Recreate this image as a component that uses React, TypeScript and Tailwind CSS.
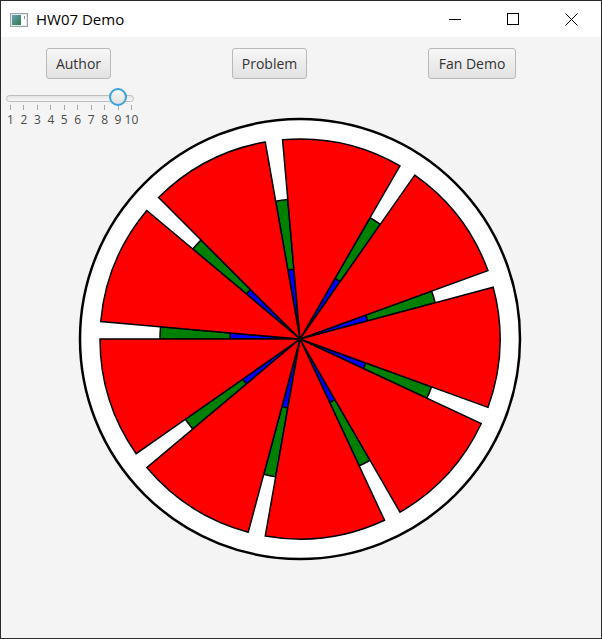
import React from 'react';

const CX = 223;
const CY = 223;

// angles are in degrees, counter-clockwise from 3 o'clock (like JavaFX Arc)
function pt(r: number, a: number) {
  const rad = (a * Math.PI) / 180;
  return [CX + r * Math.cos(rad), CY - r * Math.sin(rad)];
}

function sector(r: number, a1: number, a2: number) {
  const [x1, y1] = pt(r, a1);
  const [x2, y2] = pt(r, a2);
  return `M ${CX} ${CY} L ${x1.toFixed(2)} ${y1.toFixed(2)} A ${r} ${r} 0 0 0 ${x2.toFixed(2)} ${y2.toFixed(2)} Z`;
}

const BLADES = 9;
const STEP = 360 / BLADES;

function Fan() {
  const idx = Array.from({ length: BLADES }, (_, i) => i);
  return (
    <svg width="446" height="446" viewBox="0 0 446 446">
      <circle cx={CX} cy={CY} r={220} fill="#ffffff" stroke="#000000" strokeWidth={2.5} />
      {idx.map((k) => (
        <path key={'g' + k} d={sector(140, 15 + STEP * k, 20 + STEP * k)} fill="#008000" stroke="#000" strokeWidth={1.5} />
      ))}
      {idx.map((k) => (
        <path key={'b' + k} d={sector(70, 15 + STEP * k, 20 + STEP * k)} fill="#0000ff" stroke="#000" strokeWidth={1.5} />
      ))}
      {idx.map((k) => (
        <path key={'r' + k} d={sector(200, 20 + STEP * k, 55 + STEP * k)} fill="#ff0000" stroke="#000" strokeWidth={1.5} />
      ))}
    </svg>
  );
}

function AppIcon() {
  return (
    <svg width="18" height="14" viewBox="0 0 18 14">
      <defs>
        <linearGradient id="ic" x1="0" y1="0" x2="1" y2="1">
          <stop offset="0" stopColor="#6a9fb8" />
          <stop offset="1" stopColor="#2f7a4a" />
        </linearGradient>
      </defs>
      <rect x="0.5" y="0.5" width="17" height="13" fill="#e6e9ec" stroke="#9aa3aa" />
      <rect x="2" y="2" width="9" height="10" fill="url(#ic)" />
      <rect x="11" y="2" width="5" height="10" fill="#ffffff" />
      <rect x="14" y="3" width="1" height="3" fill="#8a9aa5" />
    </svg>
  );
}

function Btn({ label, w }: { label: string; w: string }) {
  return (
    <button
      className={`${w} h-[31px] rounded-[3px] border border-[#b9b9b9] bg-gradient-to-b from-[#f7f7f7] to-[#e2e2e2] text-[14px] text-[#333333] flex items-center justify-center`}
    >
      {label}
    </button>
  );
}

function Slider() {
  const labels = ['1', '2', '3', '4', '5', '6', '7', '8', '9', '10'];
  return (
    <div className="ml-[5px] mt-[12px] w-[132px] self-start justify-self-start col-start-1 row-start-1">
      <div className="relative h-[14px] flex items-center">
        <div className="h-[7px] w-[128px] rounded-full border border-[#bdbdbd] bg-gradient-to-b from-[#e4e4e4] to-[#f8f8f8]" />
        <div className="absolute left-[103px] top-[-3px] w-[18px] h-[18px] rounded-full border-2 border-[#39a3dc] bg-gradient-to-b from-[#fafafa] to-[#dedede]" />
      </div>
      <div className="ml-[4px] w-[122px] h-[5px] flex justify-between">
        {labels.map((l) => (
          <div key={l} className="w-px h-[5px] bg-[#a8a8a8]" />
        ))}
      </div>
      <div className="ml-[4px] w-[122px] mt-[3px] flex justify-between text-[12px] leading-[14px] text-[#4a4a4a]">
        {labels.map((l) => (
          <div key={l} className="w-px flex justify-center whitespace-nowrap">
            {l}
          </div>
        ))}
      </div>
    </div>
  );
}

export default function App() {
  return (
    <div
      className="w-[602px] h-[639px] border border-[#2b2b2b] flex flex-col overflow-hidden"
      style={{ fontFamily: '"Open Sans", "Noto Sans", sans-serif' }}
    >
      <div className="h-[36px] bg-white flex items-center shrink-0">
        <div className="ml-[9px] mt-[1px]">
          <AppIcon />
        </div>
        <div className="ml-[8px] text-[15px] text-black">HW07 Demo</div>
        <div className="ml-auto flex h-full">
          <div className="w-[58px] h-full flex items-center justify-center">
            <div className="w-[12px] h-px bg-black" />
          </div>
          <div className="w-[58px] h-full flex items-center justify-center">
            <div className="w-[12px] h-[12px] border border-black" />
          </div>
          <div className="w-[58px] h-full flex items-center justify-center mr-[1px]">
            <svg width="13" height="13" viewBox="0 0 13 13">
              <path d="M0.5 0.5 L12.5 12.5 M12.5 0.5 L0.5 12.5" stroke="#000" strokeWidth="1" />
            </svg>
          </div>
        </div>
      </div>
      <div className="flex-1 bg-[#f4f4f4] flex flex-col">
        <div className="pt-[11px] pl-[45px] flex gap-[121px]">
          <Btn label="Author" w="w-[65px]" />
          <Btn label="Problem" w="w-[75px]" />
          <Btn label="Fan Demo" w="w-[88px]" />
        </div>
        <div className="grid">
          <Slider />
          <div className="col-start-1 row-start-1 ml-[76px] mt-[37px] justify-self-start">
            <Fan />
          </div>
        </div>
      </div>
    </div>
  );
}
